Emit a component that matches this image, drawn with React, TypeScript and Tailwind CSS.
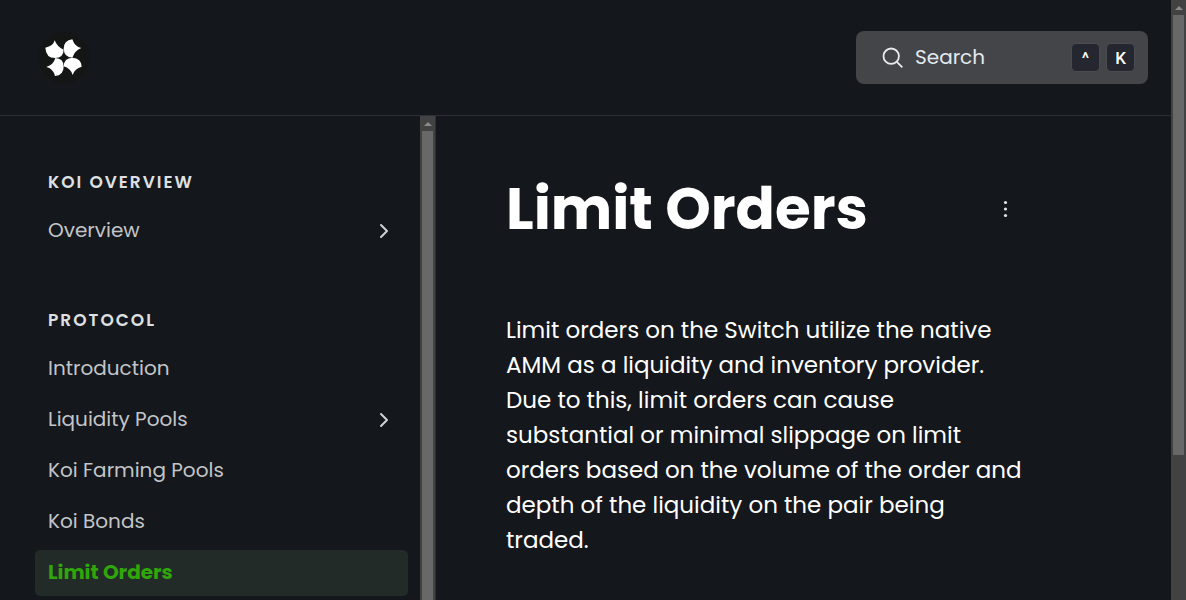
import { ChevronRight } from "lucide-react";

type NavItem = { label: string; expandable?: boolean; active?: boolean };
type NavSection = { title: string; items: NavItem[] };

const sections: NavSection[] = [
  { title: "Koi Overview", items: [{ label: "Overview", expandable: true }] },
  {
    title: "Protocol",
    items: [
      { label: "Introduction" },
      { label: "Liquidity Pools", expandable: true },
      { label: "Koi Farming Pools" },
      { label: "Koi Bonds" },
      { label: "Limit Orders", active: true },
    ],
  },
];

function Logo() {
  return (
    <svg viewBox="0 0 162 162" className="size-[54px]" aria-hidden="true">
      <circle cx="81" cy="81" r="77" fill="#141515" />
      <g fill="#fff">
        <path d="M53 28Q49 46 25 50Q27 81 54 81Q80 80 80 56Q61 49 53 28Z" />
        <path d="M106 25Q80 28 80 54Q82 80 106 80Q113 59 133 51Q113 47 106 25Z" />
        <path d="M55 81Q50 101 28 108Q48 112 54 135Q80 132 80 107Q80 82 55 81Z" />
        <path d="M106 80Q81 81 80 106Q101 112 107 132Q113 112 134 107Q133 81 106 80Z" />
      </g>
    </svg>
  );
}

function Scrollbar({ thumb }: { thumb: string }) {
  return (
    <div aria-hidden="true" className="flex w-[15px] shrink-0 flex-col bg-[#424242]">
      <div className="flex h-[15px] shrink-0 items-center justify-center">
        <svg viewBox="0 0 8 4" className="h-1 w-2">
          <path d="M0 4L4 0L8 4Z" fill="#8a8a8a" />
        </svg>
      </div>
      <div className={`mx-[2px] bg-[#686868] ${thumb}`} />
    </div>
  );
}

function Key({ children }: { children: string }) {
  return (
    <kbd className="flex size-[29px] items-center justify-center rounded-[5px] border border-[#4b4c52] bg-[#24272f] font-['Roboto','Inter',sans-serif] text-[17px] leading-[26px] font-medium text-white">
      {children}
    </kbd>
  );
}

export default function App() {
  return (
    <div className="flex h-screen overflow-hidden bg-[#14171b] font-['Poppins','Inter',sans-serif] text-white">
      <div className="flex min-w-0 flex-1 flex-col">
        <header className="flex h-[116px] shrink-0 items-center justify-between border-b border-[#2d2f35] pr-[23px] pl-[37px]">
          <a href="#home" aria-label="Koi home">
            <Logo />
          </a>
          <button
            type="button"
            className="flex h-[53px] w-[292px] items-center rounded-lg bg-[#444548] pr-[13px] pl-[26px] text-left"
          >
            <svg viewBox="0 0 22 22" className="size-[22px]" fill="none" stroke="#e8ebef" strokeWidth="1.8" aria-hidden="true">
              <circle cx="9.2" cy="9.2" r="7.7" />
              <path d="M14.8 14.8L20.3 20.3" />
            </svg>
            <span className="ml-[11px] flex-1 pb-[2px] text-xl text-[#e3e9f0]">Search</span>
            <span className="flex gap-[6px]">
              <Key>^</Key>
              <Key>K</Key>
            </span>
          </button>
        </header>

        <div className="flex min-h-0 flex-1">
          <aside className="flex w-[436px] shrink-0 border-r border-[#2d2f35]">
            <nav className="flex min-w-0 flex-1 flex-col gap-[53px] overflow-hidden pt-[53px] pr-3 pl-[35px]">
              {sections.map((section) => (
                <section key={section.title}>
                  <h2 className="mb-[13px] pl-[13px] text-[17px] leading-[26px] font-semibold tracking-[2px] text-[#dfe0e2] uppercase">
                    {section.title}
                  </h2>
                  <ul className="flex flex-col gap-[5px]">
                    {section.items.map((item) => (
                      <li key={item.label}>
                        <a
                          href="#page"
                          aria-current={item.active ? "page" : undefined}
                          className={`flex h-[46px] items-center justify-between rounded-[5px] pr-3 pl-[13px] text-xl ${
                            item.active ? "bg-[#232b29] font-bold text-[#30a60a]" : "text-[#c3c5c8]"
                          }`}
                        >
                          <span className="pb-[2px]">{item.label}</span>
                          {item.expandable && <ChevronRight className="size-6 text-[#d0d2d5]" aria-hidden="true" />}
                        </a>
                      </li>
                    ))}
                  </ul>
                </section>
              ))}
            </nav>
            <Scrollbar thumb="flex-1" />
          </aside>

          <main className="min-w-0 flex-1 overflow-hidden pt-[53px] pl-[70px]">
            <article className="max-w-[520px]">
              <div className="flex items-center justify-between">
                <h1 className="text-[58px] leading-[80px] font-bold">Limit Orders</h1>
                <button type="button" aria-label="Page options" className="flex w-[42px] justify-center">
                  <svg viewBox="0 0 6 18" className="h-[18px] w-[6px]" fill="#dfe3e8">
                    <circle cx="3.5" cy="2.5" r="1.6" />
                    <circle cx="3.5" cy="9" r="1.6" />
                    <circle cx="3.5" cy="15.5" r="1.6" />
                  </svg>
                </button>
              </div>
              <p className="mt-16 text-[23px] leading-[35px]">
                Limit orders on the Switch utilize the native AMM as a liquidity and inventory provider. Due to this,
                limit orders can cause substantial or minimal slippage on limit orders based on the volume of the order
                and depth of the liquidity on the pair being traded.
              </p>
            </article>
          </main>
        </div>
      </div>
      <Scrollbar thumb="h-[440px]" />
    </div>
  );
}
